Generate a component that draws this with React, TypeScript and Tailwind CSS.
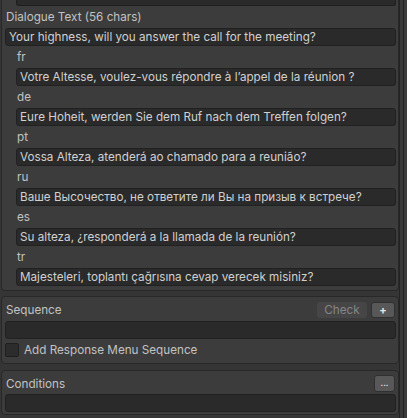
import React from 'react';

const translations: { lang: string; text: string }[] = [
  { lang: 'fr', text: 'Votre Altesse, voulez-vous répondre à l’appel de la réunion ?' },
  { lang: 'de', text: 'Eure Hoheit, werden Sie dem Ruf nach dem Treffen folgen?' },
  { lang: 'pt', text: 'Vossa Alteza, atenderá ao chamado para a reunião?' },
  { lang: 'ru', text: 'Ваше Высочество, не ответите ли Вы на призыв к встрече?' },
  { lang: 'es', text: 'Su alteza, ¿responderá a la llamada de la reunión?' },
  { lang: 'tr', text: 'Majesteleri, toplantı çağrısına cevap verecek misiniz?' },
];

const Field: React.FC<{ text?: string; className?: string }> = ({ text, className = '' }) => (
  <div
    className={`h-[18px] shrink-0 flex items-center px-[3px] pt-[1px] rounded-[3px] bg-[#2a2a2a] border border-[#212121] text-[#d0d0d0] whitespace-nowrap overflow-hidden ${className}`}
  >
    {text}
  </div>
);

const Panel: React.FC<{ children: React.ReactNode; className?: string }> = ({ children, className = '' }) => (
  <div className={`ml-[1px] shrink-0 border border-[#282828] rounded-[4px] bg-[#3c3c3c] pl-[3px] pr-[2px] flex flex-col ${className}`}>
    {children}
  </div>
);

const App: React.FC = () => {
  return (
    <div
      className="w-[407px] h-[418px] overflow-hidden bg-[#353535] flex text-[11.7px] leading-none text-[#c2c2c2]"
      style={{ fontFamily: 'Inter, "Noto Sans", sans-serif' }}
    >
      <div className="w-[399px] flex flex-col">
        {/* Dialogue text + translations (panel continues above the view) */}
        <div className="ml-[1px] shrink-0 border-x border-b border-[#282828] rounded-b-[4px] bg-[#3c3c3c] pl-[3px] pr-[2px] pb-[4px] flex flex-col gap-[2px]">
          <div className="ml-[11px] h-[6px] shrink-0 rounded-b-[3px] bg-[#2a2a2a] border-x border-b border-[#1e1e1e]" />
          <div className="h-[18px] flex items-center pl-[1px] pt-[2px]">Dialogue Text (56 chars)</div>
          <Field text="Your highness, will you answer the call for the meeting?" />
          {translations.map(t => (
            <React.Fragment key={t.lang}>
              <div className="h-[18px] flex items-center pl-[12px] pt-[2px]">{t.lang}</div>
              <Field className="ml-[11px]" text={t.text} />
            </React.Fragment>
          ))}
        </div>

        {/* Sequence */}
        <Panel className="mt-[5px] pt-[5px] pb-[6px]">
          <div className="h-[16px] flex items-center justify-between">
            <span className="pl-[1px] pt-[2px]">Sequence</span>
            <div className="flex gap-[4px] pr-[1px]">
              <div className="h-[16px] w-[50px] pt-[1px] rounded-[3px] bg-[#464646] text-[#858585] flex items-center justify-center">Check</div>
              <div className="h-[16px] w-[24px] rounded-[3px] bg-[#585858] border border-[#303030] text-[#e6e6e6] flex items-center justify-center text-[11px] font-bold">+</div>
            </div>
          </div>
          <Field className="mt-[3px]" />
          <div className="mt-[4px] h-[14px] flex items-center gap-[5px]">
            <div className="w-[14px] h-[14px] rounded-[2px] bg-[#2c2c2c] border border-[#1f1f1f]" />
            <span className="pt-[1px]">Add Response Menu Sequence</span>
          </div>
        </Panel>

        {/* Conditions */}
        <Panel className="mt-[6px] pt-[4px] pb-[2px]">
          <div className="h-[17px] flex items-center justify-between">
            <span className="pl-[1px] pt-[3px]">Conditions</span>
            <div className="mr-[1px] h-[17px] w-[21px] rounded-[3px] bg-[#585858] border border-[#303030] text-[#e6e6e6] flex items-center justify-center text-[9px] pb-[2px]">...</div>
          </div>
          <Field className="mt-[2px]" />
        </Panel>
      </div>

      {/* scrollbar strip */}
      <div className="flex-1 flex">
        <div className="w-[1px] bg-[#232323]" />
        <div className="w-[3px] bg-[#3a3a3a]" />
        <div className="w-[1px] bg-[#232323]" />
        <div className="flex-1 bg-[#3c3c3c]" />
      </div>
    </div>
  );
};

export default App;
